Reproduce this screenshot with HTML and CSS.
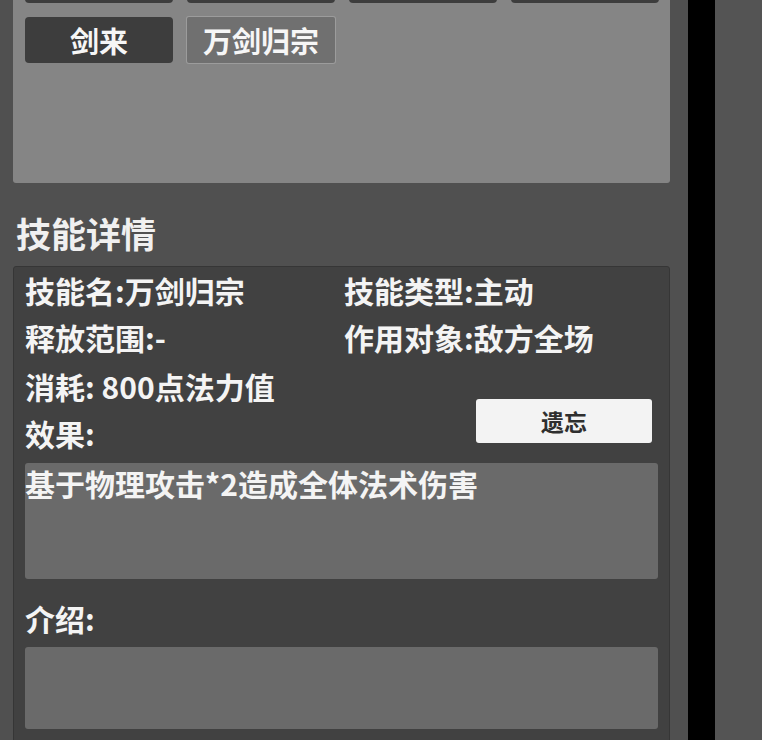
FILE: index.html
```html
<!DOCTYPE html>
<html lang="zh">
<head>
<meta charset="utf-8">
<link rel="stylesheet" href="styles.css">
</head>
<body>
<div class="screen">
  <div class="main">
    <div class="skill-list">
      <div class="skill-btn"></div>
      <div class="skill-btn"></div>
      <div class="skill-btn"></div>
      <div class="skill-btn"></div>
      <div class="skill-btn">剑来</div>
      <div class="skill-btn selected">万剑归宗</div>
    </div>
    <h2 class="section-title">技能详情</h2>
    <div class="detail">
      <div class="info-grid">
        <div class="line">技能名:万剑归宗</div>
        <div class="line">技能类型:主动</div>
        <div class="line">释放范围:-</div>
        <div class="line">作用对象:敌方全场</div>
      </div>
      <div class="cost-row">
        <div class="cost-lines">
          <div class="line">消耗: 800点法力值</div>
          <div class="line">效果:</div>
        </div>
        <button class="forget-btn">遗忘</button>
      </div>
      <div class="text-box effect">基于物理攻击*2造成全体法术伤害</div>
      <div class="line label">介绍:</div>
      <div class="text-box intro"></div>
    </div>
  </div>
  <div class="divider"></div>
  <div class="side"></div>
</div>
</body>
</html>
```

FILE: styles.css
```css
html, body {
  margin: 0;
  padding: 0;
  background: #505050;
  overflow: hidden;
}

body {
  font-family: "Noto Sans CJK SC", "Noto Sans", sans-serif;
  color: #f4f4f4;
}

.screen {
  display: flex;
  width: 762px;
  height: 740px;
  overflow: hidden;
}

.main {
  width: 657px;
  padding: 0 18px 0 13px;
  flex: none;
}

.divider {
  width: 27px;
  flex: none;
  background: #000;
}

.side {
  flex: 1;
  background: #545454;
}

.skill-list {
  margin-top: -55px;
  height: 238px;
  box-sizing: border-box;
  padding: 12px 11px 12px 12px;
  background: #858585;
  border-radius: 3px;
  display: grid;
  grid-template-columns: repeat(4, 148px);
  grid-auto-rows: 46px;
  column-gap: 14px;
  row-gap: 14px;
  align-content: start;
}

.skill-btn {
  background: #3d3d3d;
  border-radius: 4px;
  font-size: 29px;
  font-weight: 700;
  line-height: 46px;
  text-align: center;
  color: #f6f6f6;
}

.skill-btn.selected {
  background: #707070;
  box-shadow: 0 0 0 1px #9c9c9c;
  border-radius: 2px;
}

.section-title {
  margin: 0;
  padding: 30px 3px 13px;
  font-size: 35px;
  line-height: 40px;
  font-weight: 700;
  color: #f0f0f0;
}

.detail {
  background: #414141;
  border: 1px solid #363636;
  border-radius: 3px;
  padding: 0 11px 20px 11px;
}

.line {
  font-size: 30px;
  font-weight: 700;
  line-height: 47px;
  white-space: nowrap;
}

.info-grid {
  display: grid;
  grid-template-columns: 319px 1fr;
  padding-bottom: 2px;
}

.cost-row {
  display: flex;
  justify-content: space-between;
  align-items: flex-end;
}

.forget-btn {
  width: 176px;
  height: 44px;
  margin: 0 6px 14px 0;
  border: none;
  border-radius: 3px;
  background: #f3f3f3;
  color: #2f2f2f;
  font-family: "Noto Sans CJK SC", sans-serif;
  font-size: 23px;
  font-weight: 700;
  padding: 0;
}

.text-box {
  margin-top: 6px;
  background: #6a6a6a;
  border-radius: 3px;
  width: 633px;
  box-sizing: border-box;
  font-size: 30px;
  font-weight: 700;
  line-height: 40px;
  white-space: nowrap;
}

.effect {
  height: 116px;
}

.label {
  margin-top: 16px;
}

.intro {
  margin-top: 5px;
  height: 82px;
}
```
